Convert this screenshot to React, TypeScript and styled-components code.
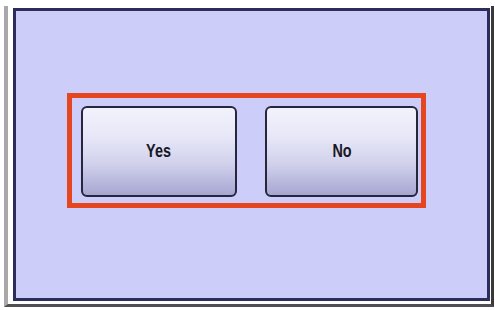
import React from "react";
import styled, { createGlobalStyle } from "styled-components";

const Global = createGlobalStyle`
  html, body {
    margin: 0;
    padding: 0;
    background: #ffffff;
    width: 495px;
    height: 310px;
    overflow: hidden;
  }
`;

const Frame = styled.div`
  box-sizing: border-box;
  display: flex;
  margin: 6px 0 0 4px;
  width: 490px;
  height: 301px;
  background: #ffffff;
  border-left: 4px solid #a9a9a9;
  border-right: 3px solid #3a3a3e;
  border-bottom: 3px solid #505054;
  padding: 2px 1px 3px 5px;
`;

const Screen = styled.div`
  box-sizing: border-box;
  flex: 1;
  display: flex;
  align-items: flex-start;
  background: #cdcdfa;
  border: 3px solid #2d2d5c;
  padding: 82px 0 0 51px;
`;

const Highlight = styled.div`
  display: flex;
  gap: 28px;
  border: 5px solid #e5461f;
  padding: 8px 3px 6px 9px;
`;

const Choice = styled.button<{ $w: number }>`
  box-sizing: border-box;
  width: ${(p) => p.$w}px;
  height: 91px;
  margin: 0;
  padding: 0;
  display: flex;
  align-items: center;
  justify-content: center;
  border: 2px solid #26263c;
  border-radius: 6px;
  background: linear-gradient(
    to bottom,
    #f2f2fd 0%,
    #e6e6f7 35%,
    #d0d0ec 65%,
    #a6a6d2 100%
  );
  cursor: pointer;
`;

const Label = styled.span`
  display: inline-block;
  font-family: "Liberation Sans", Arial, sans-serif;
  font-weight: bold;
  font-size: 18px;
  color: #181824;
  transform: scaleX(0.8);
`;

export default function App() {
  return (
    <>
      <Global />
      <Frame>
        <Screen>
          <Highlight>
            <Choice $w={156}>
              <Label>Yes</Label>
            </Choice>
            <Choice $w={153}>
              <Label>No</Label>
            </Choice>
          </Highlight>
        </Screen>
      </Frame>
    </>
  );
}
